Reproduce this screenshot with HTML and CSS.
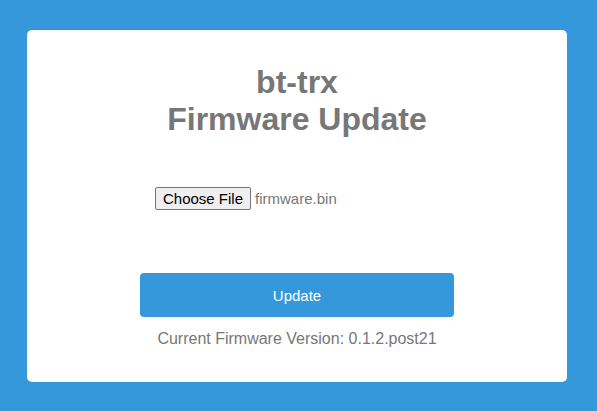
FILE: index.html
```html
<!DOCTYPE html>
<html>
<head>
<meta charset="utf-8">
<link rel="stylesheet" href="styles.css">
</head>
<body>
<div class="card">
  <h1 class="title">bt-trx<br>Firmware Update</h1>
  <div class="file-row">
    <span class="file-btn">Choose File</span>
    <span class="file-name">firmware.bin</span>
  </div>
  <button class="update">Update</button>
  <p class="version">Current Firmware Version: 0.1.2.post21</p>
</div>
</body>
</html>
```
FILE: styles.css
```css
html, body {
  margin: 0;
  padding: 0;
  height: 100%;
}
body {
  background: #3498db;
  font-family: "Liberation Sans", Arial, sans-serif;
  padding: 30px 30px 0 27px;
  box-sizing: border-box;
}
.card {
  width: 540px;
  height: 352px;
  background: #fff;
  border-radius: 5px;
  box-sizing: border-box;
  padding-top: 34px;
  display: flex;
  flex-direction: column;
  align-items: center;
}
.title {
  margin: 0;
  font-size: 32px;
  line-height: 37px;
  font-weight: bold;
  color: #777;
  text-align: center;
}
.file-row {
  width: 284px;
  margin-top: 49px;
  display: flex;
  align-items: center;
  gap: 4px;
  font-size: 15px;
}
.file-btn {
  box-sizing: border-box;
  height: 23px;
  padding: 0 7px;
  display: flex;
  align-items: center;
  background: #efefef;
  border: 1px solid #767676;
  border-radius: 2px;
  color: #000;
}
.file-name {
  color: #777;
}
.update {
  margin-top: 63px;
  width: 314px;
  height: 44px;
  border: none;
  border-radius: 4px;
  background: #3498db;
  color: #fff;
  font-family: "Liberation Sans", Arial, sans-serif;
  font-size: 15px;
}
.version {
  margin: 13px 0 0;
  font-size: 16px;
  line-height: 18px;
  color: #777;
}
```
